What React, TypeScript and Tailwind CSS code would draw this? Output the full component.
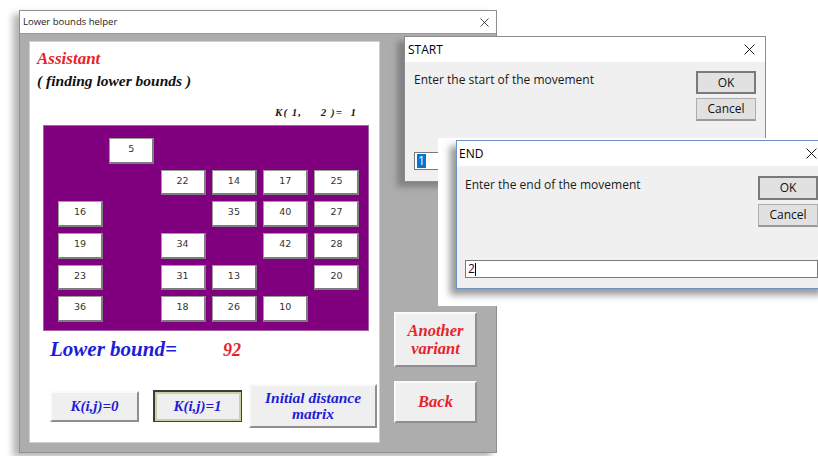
import React from "react";

const serif = "font-['Liberation_Serif','Times_New_Roman',serif] font-bold italic";
const ui = "font-['Open_Sans','Noto_Sans',sans-serif]";

const grid: (number | null)[][] = [
  [null, 5, null, null, null, null],
  [null, null, 22, 14, 17, 25],
  [16, null, null, 35, 40, 27],
  [19, null, 34, null, 42, 28],
  [23, null, 31, 13, null, 20],
  [36, null, 18, 26, 10, null],
];

function CloseIcon({ size = 10 }: { size?: number }) {
  return (
    <svg width={size} height={size} viewBox="0 0 10 10" className="shrink-0">
      <path d="M0.5 0.5 L9.5 9.5 M9.5 0.5 L0.5 9.5" stroke="#1a1a1a" strokeWidth={0.9} fill="none" />
    </svg>
  );
}

function Cell({ value }: { value: number | null }) {
  if (value === null) return <div className="h-[25.5px]" />;
  return (
    <div className="h-[25.5px] bg-white border border-[#9c9c9c] border-r-2 border-b-2 border-r-[#7d7d7d] border-b-[#7d7d7d] flex justify-center pt-[4px] font-['DejaVu_Sans',sans-serif] text-[9.5px] leading-[11px] text-[#333]">
      {value}
    </div>
  );
}

function FormButton({ children, className = "" }: { children: React.ReactNode; className?: string }) {
  return (
    <div
      className={`bg-[#efefef] border-2 border-t-[#fafafa] border-l-[#fafafa] border-r-[#8f8f8f] border-b-[#8f8f8f] flex flex-col items-center justify-center text-center ${className}`}
    >
      {children}
    </div>
  );
}

function MainForm() {
  return (
    <div className="absolute left-[19px] top-[10px] w-[478px] h-[443px] flex flex-col border border-[#8f8f8f] bg-[#adadad] shadow-[-6px_4px_7px_rgba(0,0,0,0.3)]">
      <div className="h-[22px] shrink-0 bg-white flex items-center justify-between pl-[3px] pr-[7px]">
        <span className={`${ui} text-[9.5px] leading-[12px] text-[#222]`}>Lower bounds helper</span>
        <CloseIcon size={9} />
      </div>
      <div className="flex-1 flex pl-[9px] pt-[7px] pb-[9px] border-t border-[#9a9a9a]">
        {/* white working panel */}
        <div className="w-[351px] bg-white border border-[#cfcfcf] flex flex-col">
          <div className={`${serif} mt-[7px] pl-[7px] text-[17px] leading-[20px] text-[#e8232b]`}>Assistant</div>
          <div className={`${serif} mt-[2px] pl-[7px] text-[15.5px] leading-[20px] text-[#111]`}>( finding lower bounds )</div>
          <div className={`${serif} mt-[14px] pr-[22px] text-right whitespace-pre text-[11px] leading-[14px] tracking-[1px] text-[#222]`}>
            {"K( 1,     2 )=  1"}
          </div>
          <div className="mt-[6px] ml-[13px] w-[326px] h-[206px] bg-[#800080] border border-[#a463a4] pl-[14px] pt-[12px]">
            <div className="grid grid-cols-[repeat(6,45px)] gap-x-[6.3px] gap-y-[6.2px]">
              {grid.flatMap((row, r) => row.map((v, c) => <Cell key={`${r}-${c}`} value={v} />))}
            </div>
          </div>
          <div className="mt-[6px] pl-[20px] flex items-baseline h-[24px]">
            <span className={`${serif} text-[21px] leading-[24px] text-[#1d1dd8]`}>Lower bound=</span>
            <span className={`${serif} ml-[46px] text-[18px] leading-[24px] text-[#e8232b]`}>92</span>
          </div>
          <div className="mt-[23px] pl-[20px] h-[44px] flex items-center">
            <FormButton className="w-[89px] h-[31px]">
              <span className={`${serif} text-[15px] leading-[18px] text-[#1d1dd8]`}>K(i,j)=0</span>
            </FormButton>
            <div className="ml-[14px] w-[89px] h-[32px] bg-[#3c3c3c] p-[1.5px]">
              <div className="w-full h-full bg-[#efefef] border-2 border-[#cfcfa6] flex items-center justify-center">
                <span className={`${serif} text-[15px] leading-[18px] text-[#1d1dd8]`}>K(i,j)=1</span>
              </div>
            </div>
            <FormButton className="ml-[7px] w-[128px] h-[44px]">
              <span className={`${serif} text-[15.5px] leading-[16px] text-[#1d1dd8]`}>Initial distance</span>
              <span className={`${serif} text-[15.5px] leading-[16px] text-[#1d1dd8]`}>matrix</span>
            </FormButton>
          </div>
        </div>
        {/* right-hand command column */}
        <div className="ml-[14px] w-[83px] flex flex-col justify-end gap-[14px] pb-[20px]">
          <FormButton className="h-[55px]">
            <span className={`${serif} text-[16.5px] leading-[18px] text-[#e8232b]`}>Another</span>
            <span className={`${serif} text-[16.5px] leading-[18px] text-[#e8232b]`}>variant</span>
          </FormButton>
          <FormButton className="h-[42px]">
            <span className={`${serif} text-[16.5px] leading-[18px] text-[#e8232b]`}>Back</span>
          </FormButton>
        </div>
      </div>
    </div>
  );
}

function DialogButtons({ okH }: { okH: number }) {
  return (
    <div className="w-[60px] flex flex-col gap-[4px] shrink-0">
      <div
        className="bg-[#e1e1e1] border-2 border-[#7a7a7a] flex items-center justify-center text-[12px] text-[#111]"
        style={{ height: okH }}
      >
        OK
      </div>
      <div className="h-[23px] bg-[#e1e1e1] border border-[#adadad] border-b-2 border-b-[#9a9a9a] flex items-center justify-center text-[12px] text-[#111]">
        Cancel
      </div>
    </div>
  );
}

function StartDialog() {
  return (
    <div className={`${ui} absolute left-[404px] top-[36px] w-[362px] h-[146px] flex flex-col border border-[#8c8c8c] bg-[#f0f0f0] shadow-[-7px_5px_6px_rgba(0,0,0,0.25)]`}>
      <div className="h-[25px] shrink-0 bg-white flex items-center justify-between pl-[3px] pr-[10px]">
        <span className="text-[12px] leading-[16px] text-black">START</span>
        <CloseIcon size={11} />
      </div>
      <div className="flex-1 flex flex-col px-[9px] pb-[11px]">
        <div className="flex justify-between pt-[9px]">
          <span className="text-[12px] leading-[16px] text-[#1a1a1a] pt-px">Enter the start of the movement</span>
          <DialogButtons okH={23} />
        </div>
        <div className="mt-auto h-[18px] bg-white border border-[#7a7a7a] flex items-center pl-[2px]">
          <span className="bg-[#0078d7] text-white text-[12px] leading-[14px] px-px">1</span>
        </div>
      </div>
    </div>
  );
}

function EndDialog() {
  return (
    <>
      <div className="absolute left-[438px] top-[138px] w-[380px] h-[168px] bg-white" />
      <div className={`${ui} absolute left-[456px] top-[140px] w-[372px] h-[149px] flex flex-col border border-[#6f91c6] bg-[#f0f0f0] shadow-[-6px_6px_7px_rgba(0,0,0,0.4)]`}>
        <div className="h-[25px] shrink-0 bg-white flex items-center justify-between pl-[2px] pr-[10px]">
          <span className="text-[12px] leading-[16px] text-black">END</span>
          <CloseIcon size={11} />
        </div>
        <div className="flex-1 flex flex-col pl-[8px] pr-[9px] pb-[10px]">
          <div className="flex justify-between pt-[10px]">
            <span className="text-[12px] leading-[16px] text-[#1a1a1a] pt-px">Enter the end of the movement</span>
            <DialogButtons okH={24} />
          </div>
          <div className="mt-auto h-[18px] bg-white border border-[#7a7a7a] flex items-center pl-[2px]">
            <span className="text-[12px] leading-[14px] text-[#111]">2</span>
            <span className="w-px h-[13px] bg-black" />
          </div>
        </div>
      </div>
    </>
  );
}

export default function App() {
  return (
    <div className="relative w-[818px] h-[456px] overflow-hidden bg-white">
      <MainForm />
      <StartDialog />
      <EndDialog />
    </div>
  );
}
